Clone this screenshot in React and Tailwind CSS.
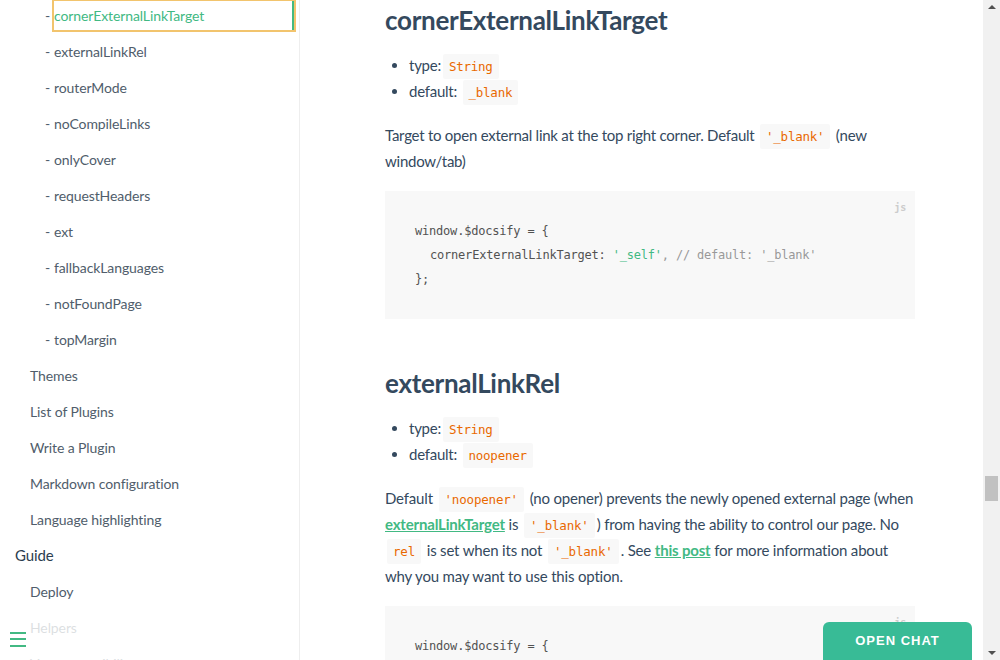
const subItems = [
  "externalLinkRel",
  "routerMode",
  "noCompileLinks",
  "onlyCover",
  "requestHeaders",
  "ext",
  "fallbackLanguages",
  "notFoundPage",
  "topMargin",
];

const pageItems = ["Themes", "List of Plugins", "Write a Plugin", "Markdown configuration", "Language highlighting"];

const sans = "font-['Lato','Noto_Sans',sans-serif]";
const mono = "font-['DejaVu_Sans_Mono','Liberation_Mono',monospace]";

function Code({ children }) {
  return (
    <code className={`mx-[2px] rounded-[2px] bg-[#f8f8f8] px-[6px] py-[5px] text-[12.5px] leading-none text-[#e96900] ${mono}`}>
      {children}
    </code>
  );
}

function Sidebar() {
  return (
    <aside className={`relative w-[300px] shrink-0 overflow-hidden border-r border-[#eee] ${sans}`}>
      <ul className="-mt-[3px] text-[14px] tracking-[-0.1px] text-[#505d6b]">
        <li className="flex h-9 items-center pl-[45px]">
          <span className="w-[9px]">-</span>
          <a className="mr-[5px] flex h-[29px] flex-1 items-center border-r-2 border-[#42b983] text-[#42b983] outline-2 outline-[#f2c46d]">
            cornerExternalLinkTarget
          </a>
        </li>
        {subItems.map((item) => (
          <li key={item} className="flex h-9 items-center pl-[45px]">
            <span className="w-[9px]">-</span>
            <span>{item}</span>
          </li>
        ))}
        {pageItems.map((item) => (
          <li key={item} className="flex h-9 items-center pl-[30px]">
            {item}
          </li>
        ))}
        <li className="flex h-9 items-center pl-[15px] text-[15px] text-[#2c3e50]">Guide</li>
        <li className="flex h-9 items-center pl-[30px]">Deploy</li>
        <li className="flex h-9 items-center pl-[30px]">Helpers</li>
        <li className="flex h-9 items-center pl-[30px]">Vue compatibility</li>
      </ul>
      <div className="absolute bottom-0 left-0 flex h-[42px] w-[284px] items-center bg-white/80 pl-[10px]">
        <div className="flex w-4 flex-col gap-[4.5px]">
          <span className="h-[2px] bg-[#42b983]" />
          <span className="h-[2px] bg-[#42b983]" />
          <span className="h-[2px] bg-[#42b983]" />
        </div>
      </div>
    </aside>
  );
}

function Props({ type, def }) {
  return (
    <ul className="mt-3 list-disc pl-6 text-[15px] leading-[26px] tracking-[-0.25px] marker:text-[#34495e]">
      <li>
        type:<Code>{type}</Code>
      </li>
      <li>
        default: <Code>{def}</Code>
      </li>
    </ul>
  );
}

function CodeBlock({ children }) {
  return (
    <div className={`relative mt-[17px] bg-[#f8f8f8] px-[30px] py-[28px] text-[12px] leading-[24px] tracking-[-0.2px] text-[#525252] ${mono}`}>
      <span className="absolute right-[9px] top-[5px] text-[10px] font-bold text-[#ccc]">js</span>
      {children}
    </div>
  );
}

function Main() {
  return (
    <main className={`relative flex-1 overflow-hidden text-[#34495e] ${sans}`}>
      <article className="ml-[85px] w-[530px]">
        <h2 className="text-[26px] font-bold leading-[40px] tracking-[-0.3px] text-[#34495e]">cornerExternalLinkTarget</h2>
        <Props type="String" def="_blank" />
        <p className="mt-[18px] text-[15px] leading-[26px] tracking-[-0.25px]">
          Target to open external link at the top right corner. Default <Code>'_blank'</Code> (new window/tab)
        </p>
        <CodeBlock>
          <div>window.$docsify = {"{"}</div>
          <div className="pl-[15px]">
            cornerExternalLinkTarget: <span className="text-[#42b983]">'_self'</span>
            <span className="text-[#999]">, // default: '_blank'</span>
          </div>
          <div>{"};"}</div>
        </CodeBlock>

        <h2 className="mt-[44px] text-[26px] font-bold leading-[40px] tracking-[-0.3px] text-[#34495e]">externalLinkRel</h2>
        <Props type="String" def="noopener" />
        <p className="mt-[18px] text-[15px] leading-[26px] tracking-[-0.18px]">
          Default <Code>'noopener'</Code> (no opener) prevents the newly opened external page (when{" "}
          <a className="font-bold text-[#42b983] underline">externalLinkTarget</a> is <Code>'_blank'</Code>) from having
          the ability to control our page. No <Code>rel</Code> is set when its not <Code>'_blank'</Code>. See{" "}
          <a className="font-bold text-[#42b983] underline">this post</a> for more information about why you may want to
          use this option.
        </p>
        <CodeBlock>
          <div>window.$docsify = {"{"}</div>
          <div className="pl-[15px]">externalLinkRel: 'noopener',</div>
          <div>{"};"}</div>
        </CodeBlock>
      </article>
      <button className="absolute bottom-0 left-[523px] flex h-[38px] w-[149px] items-center justify-center rounded-t-[6px] bg-[#38bb96] font-['Liberation_Sans',sans-serif] text-[13px] font-bold tracking-[1px] text-white">
        OPEN CHAT
      </button>
    </main>
  );
}

function Scrollbar() {
  return (
    <div className="flex w-[17px] shrink-0 flex-col items-center bg-[#f1f1f1]">
      <div className="mt-[5px] h-0 w-0 border-x-4 border-b-4 border-x-transparent border-b-[#505050]" />
      <div className="mt-[467px] h-[25px] w-[13px] bg-[#c1c1c1]" />
      <div className="mt-auto mb-[5px] h-0 w-0 border-x-4 border-t-4 border-x-transparent border-t-[#505050]" />
    </div>
  );
}

export default function App() {
  return (
    <div className="flex h-[660px] w-[1000px] overflow-hidden bg-white">
      <Sidebar />
      <Main />
      <Scrollbar />
    </div>
  );
}
